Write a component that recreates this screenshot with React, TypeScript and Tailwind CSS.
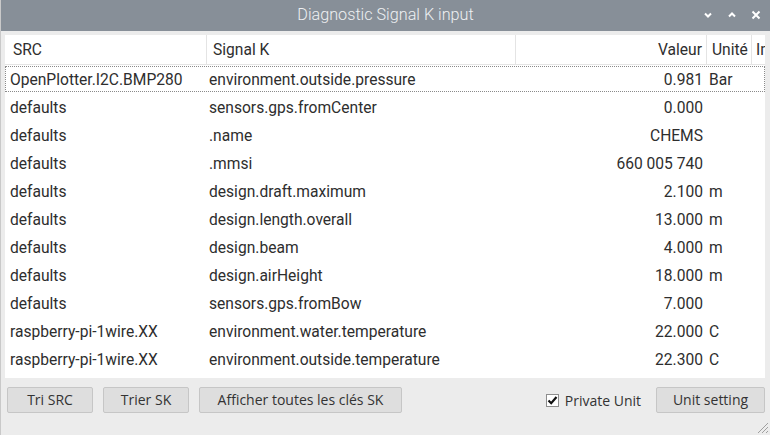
import React from 'react';

type Row = { src: string; sk: string; val: string; unit: string };

const rows: Row[] = [
  { src: 'OpenPlotter.I2C.BMP280', sk: 'environment.outside.pressure', val: '0.981', unit: 'Bar' },
  { src: 'defaults', sk: 'sensors.gps.fromCenter', val: '0.000', unit: '' },
  { src: 'defaults', sk: '.name', val: 'CHEMS', unit: '' },
  { src: 'defaults', sk: '.mmsi', val: '660 005 740', unit: '' },
  { src: 'defaults', sk: 'design.draft.maximum', val: '2.100', unit: 'm' },
  { src: 'defaults', sk: 'design.length.overall', val: '13.000', unit: 'm' },
  { src: 'defaults', sk: 'design.beam', val: '4.000', unit: 'm' },
  { src: 'defaults', sk: 'design.airHeight', val: '18.000', unit: 'm' },
  { src: 'defaults', sk: 'sensors.gps.fromBow', val: '7.000', unit: '' },
  { src: 'raspberry-pi-1wire.XX', sk: 'environment.water.temperature', val: '22.000', unit: 'C' },
  { src: 'raspberry-pi-1wire.XX', sk: 'environment.outside.temperature', val: '22.300', unit: 'C' },
];

const cols = 'grid grid-cols-[202px_309px_191px_45px_1fr]';

function Btn({ label, w }: { label: string; w: string }) {
  return (
    <button className={`${w} h-[26px] rounded-[2px] border border-[#c6c6c6] bg-[#dedede] text-[14px] leading-none text-[#333] font-['Open_Sans',sans-serif]`}>
      {label}
    </button>
  );
}

export default function App() {
  return (
    <div className="w-[770px] h-[435px] overflow-hidden bg-[#ececec] flex flex-col border-l border-[#c9c9c9] font-['Roboto',sans-serif]">
      <div className="h-[31px] shrink-0 bg-[#878f98] relative flex items-center justify-center">
        <span className="text-[16.2px] font-light text-[#eef0f2]">Diagnostic Signal K input</span>
        <div className="absolute right-[8px] top-[10px] flex items-center gap-[12px] text-white">
          <svg width="12" height="10" viewBox="0 0 12 10">
            <path d="M3 3.5 L6 6.5 L9 3.5" stroke="#fff" strokeWidth="2" fill="none" />
          </svg>
          <svg width="12" height="10" viewBox="0 0 12 10">
            <path d="M3 6.5 L6 3.5 L9 6.5" stroke="#fff" strokeWidth="2" fill="none" />
          </svg>
          <svg width="12" height="10" viewBox="0 0 12 10">
            <path d="M2.5 1.5 L9.5 8.5 M9.5 1.5 L2.5 8.5" stroke="#fff" strokeWidth="2" fill="none" />
          </svg>
        </div>
      </div>

      <div className="pl-[4px] pt-[4px] pr-[5px]">
        <div className="h-[343px] bg-white overflow-hidden text-[15.6px] text-[#2e2e2e]">
          <div className={`${cols} h-[30px] border-b border-[#e4e4e4] items-center`}>
            <div className="pl-[8px] pt-[3px] h-full flex items-center border-r border-[#e4e4e4]">SRC</div>
            <div className="pl-[6px] pt-[3px] h-full flex items-center border-r border-[#e4e4e4]">Signal K</div>
            <div className="pr-[4px] pt-[3px] h-full flex items-center justify-end border-r border-[#e4e4e4]">Valeur</div>
            <div className="pl-[5px] pt-[3px] h-full flex items-center border-r border-[#e4e4e4] whitespace-nowrap">Unité</div>
            <div className="pl-[4px] pt-[3px] h-full flex items-center whitespace-nowrap overflow-hidden">In</div>
          </div>
          {rows.map((r, i) => (
            <div key={i} className="h-[28px] flex items-center">
              <div
                className={`${cols} w-full h-[26px] pt-[2px] items-center ${i === 0 ? 'border border-dotted border-[#8a8a8a]' : 'border border-transparent'}`}
              >
                <div className="pl-[4px] whitespace-nowrap">{r.src}</div>
                <div className="pl-[1px] whitespace-nowrap">{r.sk}</div>
                <div className="pr-[5px] text-right whitespace-nowrap">{r.val}</div>
                <div className="pl-[1px] whitespace-nowrap">{r.unit}</div>
                <div />
              </div>
            </div>
          ))}
        </div>
      </div>

      <div className="flex items-center pl-[6px] pr-[5px] mt-[9px] h-[26px]">
        <div className="flex gap-[10px]">
          <Btn label="Tri SRC" w="w-[86px]" />
          <Btn label="Trier SK" w="w-[86px]" />
          <Btn label="Afficher toutes les clés SK" w="w-[203px]" />
        </div>
        <div className="ml-auto flex items-center gap-[15px]">
          <label className="flex items-center gap-[6px] text-[14px] text-[#333] font-['Open_Sans',sans-serif]">
            <span className="w-[13px] h-[13px] border border-[#8d8d8d] bg-white flex items-center justify-center">
              <svg width="11" height="11" viewBox="0 0 11 11">
                <path d="M1.5 5.5 L4.2 8.2 L9.5 2" stroke="#111" strokeWidth="2.2" fill="none" />
              </svg>
            </span>
            Private Unit
          </label>
          <Btn label="Unit setting" w="w-[109px]" />
        </div>
      </div>

      <div className="flex-1 flex justify-end items-end pr-[1px] pb-[1px]">
        <svg width="14" height="14" viewBox="0 0 14 14">
          <path d="M13 3 L3 13 M13 7 L7 13 M13 11 L11 13" stroke="#a0a0a0" strokeWidth="1" />
        </svg>
      </div>
    </div>
  );
}
